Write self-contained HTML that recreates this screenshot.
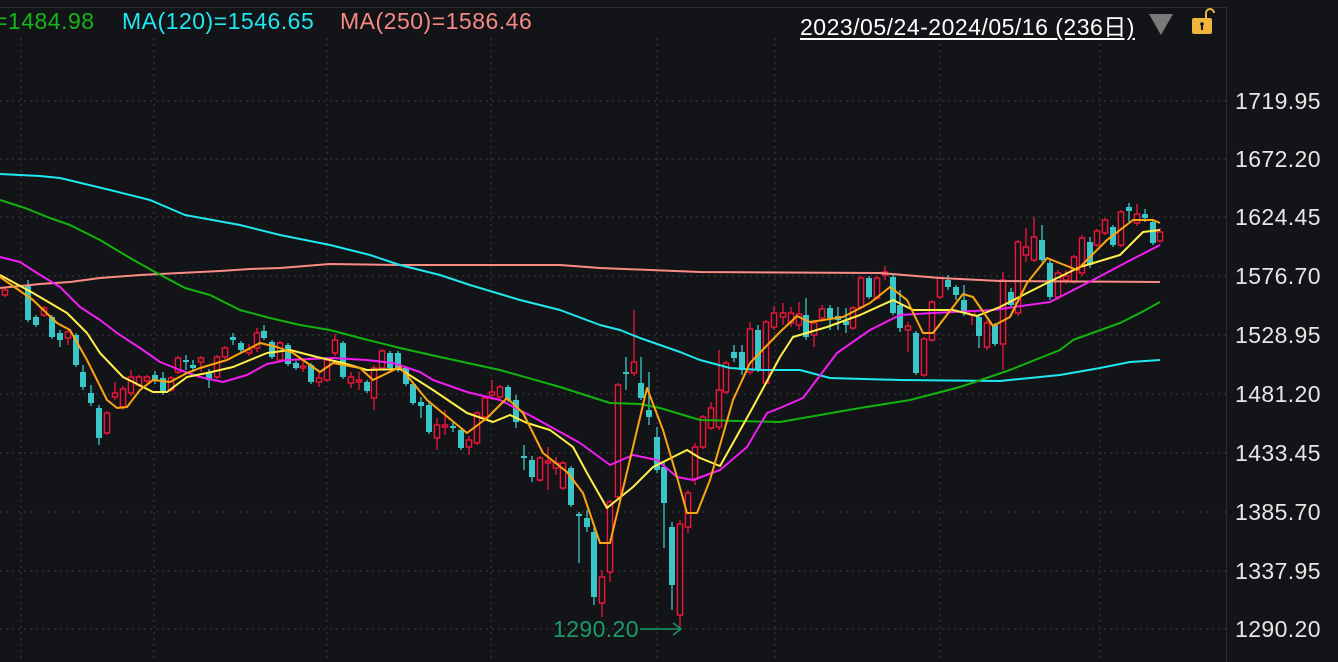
<!DOCTYPE html>
<html><head><meta charset="utf-8"><style>
html,body{margin:0;padding:0;background:#131418;width:1338px;height:662px;overflow:hidden;font-family:"Liberation Sans","Noto Sans CJK JP",sans-serif}
.t{position:absolute;font-size:23px;top:8px;letter-spacing:0.5px}
.ax{position:absolute;left:1235px;color:#e6e6e6;font-size:23px;letter-spacing:0.4px}
</style></head><body>
<svg width="1338" height="662" style="position:absolute;left:0;top:0">
<g stroke="#3a3c40" stroke-width="1" stroke-dasharray="2,4">
<line x1="0" x2="1226" y1="101" y2="101"/><line x1="0" x2="1226" y1="159" y2="159"/><line x1="0" x2="1226" y1="217" y2="217"/><line x1="0" x2="1226" y1="276" y2="276"/><line x1="0" x2="1226" y1="335" y2="335"/><line x1="0" x2="1226" y1="394" y2="394"/><line x1="0" x2="1226" y1="453" y2="453"/><line x1="0" x2="1226" y1="512" y2="512"/><line x1="0" x2="1226" y1="571" y2="571"/><line x1="0" x2="1226" y1="629" y2="629"/>
<line x1="21" x2="21" y1="38" y2="662"/><line x1="154" x2="154" y1="38" y2="662"/><line x1="327" x2="327" y1="38" y2="662"/><line x1="491" x2="491" y1="38" y2="662"/><line x1="657" x2="657" y1="38" y2="662"/><line x1="775" x2="775" y1="38" y2="662"/><line x1="940" x2="940" y1="38" y2="662"/><line x1="1100" x2="1100" y1="38" y2="662"/>
</g>
<line x1="0" x2="1226" y1="7.5" y2="7.5" stroke="#2a2c30"/>
<line x1="1226.5" x2="1226.5" y1="7" y2="662" stroke="#2a2c30"/>
<g id="candles"></g>
<g fill="none" stroke-width="2" stroke-linejoin="round">
<polyline stroke="#fa8c84" points="0,288 40,284 70,282 100,278 140,275 180,273 220,271 250,269 280,268 330,264 400,265 480,265 560,265 600,268 700,272 880,273 940,278 1000,281 1160,282"/>
<polyline stroke="#1fe8f0" points="0,174 40,176 60,178 110,190 150,200 185,215 240,225 280,235 330,245 370,255 400,265 440,275 470,285 520,300 560,310 600,325 620,330 640,338 660,345 680,352 700,360 730,368 760,370 800,370 830,378 900,380 1000,381 1030,378 1060,375 1100,368 1130,362 1160,360"/>
<polyline stroke="#13b30e" points="0,200 25,208 50,218 70,225 100,240 130,258 155,272 185,288 210,295 240,310 270,318 300,325 330,330 360,338 400,348 440,357 500,370 560,387 610,403 640,404 660,408 700,420 780,422 860,408 910,400 960,387 1010,370 1060,350 1073,340 1120,323 1140,313 1160,302"/>
<polyline stroke="#f01ef0" points="0,257 20,262 37,273 60,287 80,307 100,320 117,333 140,348 160,362 180,370 200,377 223,382 247,375 267,364 287,360 333,358 367,360 393,363 420,372 433,380 467,392 500,400 533,417 580,443 610,465 633,455 657,460 677,477 693,480 720,470 747,447 767,413 780,408 803,398 837,353 870,330 900,315 933,313 993,310 1050,302 1093,280 1127,262 1160,245"/>
<polyline stroke="#fff04a" points="0,275 33,293 67,313 87,333 100,353 123,377 153,392 167,392 187,377 207,373 233,367 267,353 290,350 317,357 343,363 367,370 400,369 433,390 467,413 493,422 510,415 527,423 550,430 573,447 587,473 607,508 633,487 653,467 687,450 700,458 720,466 733,443 753,407 780,357 793,337 827,327 860,315 893,300 913,310 953,310 977,316 1000,307 1027,293 1053,280 1080,267 1120,255 1143,232 1160,230"/>
<polyline stroke="#fca50f" points="0,277 33,300 57,323 70,330 87,360 107,400 117,408 127,407 140,390 153,380 170,382 187,373 200,368 227,360 260,343 277,347 293,353 320,372 333,363 360,368 373,380 400,367 427,400 467,433 487,418 507,398 523,413 543,453 567,472 583,493 600,543 610,543 633,447 647,388 663,430 677,477 687,513 697,513 710,480 733,400 750,363 780,332 797,316 810,322 843,317 870,303 890,287 907,300 923,333 933,333 963,294 973,297 993,326 1010,317 1027,283 1047,258 1077,270 1107,240 1133,220 1153,220 1160,223"/>
</g>
<line x1="640" x2="680" y1="629" y2="629" stroke="#1a9a6a" stroke-width="1.5"/>
<polyline points="673,623 681,629 673,635" fill="none" stroke="#1a9a6a" stroke-width="1.5"/>
<polygon points="1149,14 1173,14 1161,35" fill="#7a7a7a"/>
<rect x="1192" y="18" width="20" height="16" rx="2" fill="#f2b53c"/>
<path d="M1206,18 V13 a4,4 0 0 1 8,0" fill="none" stroke="#f2b53c" stroke-width="2"/>
<circle cx="1202" cy="24" r="1.8" fill="#131418"/><rect x="1201" y="24" width="2" height="6" fill="#131418"/>
</svg>
<div class="t" style="left:-6px;color:#17b517">=1484.98</div>
<div class="t" style="left:122px;color:#1fe8f0">MA(120)=1546.65</div>
<div class="t" style="left:340px;color:#f58a84">MA(250)=1586.46</div>
<div class="t" style="left:800px;color:#fff;text-decoration:underline;text-underline-offset:3px">2023/05/24-2024/05/16 (236日)</div>
<div style="position:absolute;left:553px;top:616px;color:#1a9a6a;font-size:23px;letter-spacing:0.4px">1290.20</div>
<div class="ax" style="top:88px">1719.95</div>
<div class="ax" style="top:146px">1672.20</div>
<div class="ax" style="top:204px">1624.45</div>
<div class="ax" style="top:263px">1576.70</div>
<div class="ax" style="top:322px">1528.95</div>
<div class="ax" style="top:381px">1481.20</div>
<div class="ax" style="top:440px">1433.45</div>
<div class="ax" style="top:499px">1385.70</div>
<div class="ax" style="top:558px">1337.95</div>
<div class="ax" style="top:616px">1290.20</div>
<script>
var d=[
[5,290,295,'r'],[28,285,320,'c',280,322],[36,317,325,'c'],[44,308,315,'r'],[52,317,337,'c'],[60,333,340,'c',330,347],[68,332,338,'r',330,345],[76,335,365,'c'],[83,372,387,'c',365,390],[91,393,403,'c',385,406],[99,408,438,'c',405,445],[107,413,433,'r'],[115,393,397,'r',382,400],[123,389,407,'r',386,410],[131,377,393,'r',370,396],[139,377,385,'r'],[147,377,381,'r'],[155,375,380,'c',371,384],[163,378,392,'c',372,395],[171,378,390,'r'],[178,358,372,'r'],[186,360,362,'c',355,370],[193,365,368,'c',360,372],[201,358,362,'r',356,372],[209,373,380,'c',369,388],[217,357,377,'r'],[225,348,357,'r'],[233,337,340,'c',333,345],[241,343,350,'c'],[249,350,353,'r',344,356],[257,333,348,'r',328,352],[264,331,338,'c',325,340],[272,342,357,'c'],[280,343,360,'r'],[288,345,364,'c'],[296,363,368,'c'],[303,366,368,'r',360,372],[311,365,382,'c'],[319,378,382,'r',372,387],[327,360,380,'r'],[335,340,353,'r',334,356],[343,343,377,'c'],[351,377,383,'r',372,388],[359,380,382,'r',372,390],[367,382,391,'c'],[374,368,398,'r',365,410],[382,351,368,'r'],[390,353,368,'c'],[398,353,370,'c'],[406,368,384,'c'],[413,384,403,'c'],[421,402,406,'c',397,418],[429,405,432,'c'],[437,425,438,'r',418,450],[445,425,427,'r',410,435],[453,426,428,'c',422,432],[461,430,448,'c'],[469,440,447,'r',436,455],[477,413,443,'r'],[485,398,417,'r'],[492,392,395,'r',380,400],[500,387,397,'r'],[508,387,400,'c'],[516,400,422,'c',395,428],[524,456,458,'c',445,470],[532,460,477,'c',456,482],[540,458,480,'r'],[548,461,463,'r',447,490],[556,463,468,'r',457,475],[563,463,488,'r'],[571,468,505,'c'],[579,514,516,'c',512,563],[587,518,527,'c',510,532],[594,532,597,'c',528,605],[602,577,603,'r',570,617],[610,502,572,'r',500,582],[618,385,497,'r'],[626,372,374,'c',357,390],[634,362,373,'r',310,376],[641,383,398,'c',357,400],[649,410,417,'c',372,425],[657,437,470,'c',427,473],[664,467,503,'c',462,548],[672,527,585,'c',522,610],[680,524,615,'r',520,628],[688,493,527,'r',490,533],[695,447,479,'r',443,485],[703,417,447,'r'],[711,408,428,'r',402,430],[719,390,427,'r',350,430],[726,363,392,'r'],[734,352,358,'c',345,362],[742,352,370,'c',345,375],[750,329,372,'r',322,375],[758,330,370,'c',325,372],[766,322,383,'r'],[774,313,327,'r',306,330],[783,313,317,'r',303,325],[791,313,323,'r',307,327],[799,314,325,'r',302,330],[806,315,337,'c',298,340],[814,323,335,'r',320,347],[822,309,318,'r',305,322],[830,308,318,'c',305,330],[838,316,320,'c',307,330],[846,321,325,'c',308,333],[853,308,328,'r'],[861,278,307,'r'],[869,278,297,'c'],[877,278,298,'r'],[885,272,275,'r',266,280],[893,277,313,'c'],[900,305,328,'c',290,332],[908,326,330,'r',322,352],[916,333,373,'c'],[924,339,375,'r'],[932,302,340,'r'],[940,278,297,'r'],[948,280,287,'c',275,290],[956,287,295,'c',285,300],[964,300,313,'c',285,316],[972,311,315,'r',310,325],[979,317,336,'c',314,348],[987,323,347,'r',320,350],[995,325,344,'c'],[1003,280,344,'r',272,370],[1011,292,305,'c',288,308],[1018,242,313,'r',240,316],[1026,247,255,'r',228,262],[1034,237,260,'r',217,262],[1042,240,260,'c',225,262],[1050,263,297,'c',260,300],[1058,273,297,'r',270,300],[1066,276,280,'r',270,284],[1074,257,282,'r'],[1082,238,273,'r',235,276],[1090,242,265,'c',237,268],[1097,231,245,'r'],[1105,220,233,'r',218,235],[1113,227,245,'c'],[1121,212,245,'r'],[1129,207,211,'c',203,222],[1137,214,223,'r',204,226],[1145,214,218,'c',209,222],[1153,222,243,'c',220,245],[1160,232,241,'r',228,243]];
var s='';d.forEach(function(c){var col=c[3]=='r'?'#f0163a':'#39c6c8';var t=Math.min(c[1],c[2]),b=Math.max(c[1],c[2]);var wt=c[4]||t-2,wb=c[5]||b+2;
s+='<line x1="'+c[0]+'" x2="'+c[0]+'" y1="'+wt+'" y2="'+wb+'" stroke="'+col+'" stroke-width="1.3"/>';
var h=Math.max(b-t,1.5);
if(c[3]=='r')s+='<rect x="'+(c[0]-2.6)+'" y="'+t+'" width="5.2" height="'+h+'" fill="#131418" stroke="'+col+'" stroke-width="1.4"/>';
else s+='<rect x="'+(c[0]-3)+'" y="'+t+'" width="6" height="'+h+'" fill="'+col+'"/>';});
document.getElementById('candles').innerHTML=s;
</script>
</body></html>
